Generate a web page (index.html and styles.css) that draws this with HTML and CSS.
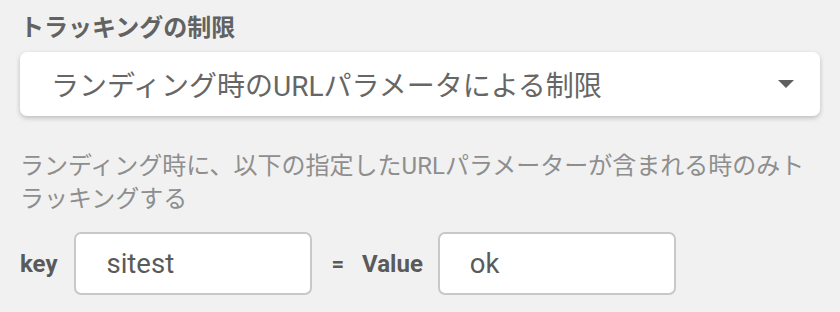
FILE: index.html
```html
<!DOCTYPE html>
<html lang="ja">
<head>
  <meta charset="UTF-8" />
  <title>トラッキングの制限</title>
  <link rel="stylesheet" href="styles.css">
</head>
<body>
  <section class="setting">
    <h3 class="setting-title">トラッキングの制限</h3>

    <div class="select-box">
      <span class="select-text">ランディング時のURLパラメータによる制限</span>
      <svg class="select-arrow" width="16" height="8" viewBox="0 0 16 8">
        <path d="M0 0 H16 L8 8 Z" fill="#5f5f5f"/>
      </svg>
    </div>

    <p class="setting-desc">ランディング時に、以下の指定したURLパラメーターが含まれる時のみトラッキングする</p>

    <div class="param-row">
      <label class="param-label" for="keyInput">key</label>
      <input id="keyInput" class="param-input" type="text" value="sitest" />
      <span class="param-eq">=</span>
      <label class="param-label" for="valueInput">Value</label>
      <input id="valueInput" class="param-input" type="text" value="ok" />
    </div>
  </section>
</body>
</html>
```

FILE: styles.css
```css
/* Base */
body {
  margin: 0;
  padding: 12px 20px 0;
  background: #f1f1f1;
  font-family: Roboto, "Noto Sans CJK JP", sans-serif;
  color: #666;
}

.setting {
  width: 800px;
}

/* Title */
.setting-title {
  margin: 0 0 7px;
  font-size: 24px;
  line-height: 33px;
  font-weight: 700;
  color: #626262;
}

/* Select */
.select-box {
  display: flex;
  align-items: center;
  justify-content: space-between;
  height: 64px;
  padding: 0 26px 0 31px;
  background: #fff;
  border-radius: 7px;
  box-shadow: 0 2px 5px rgba(0,0,0,0.22);
}

.select-text {
  font-size: 28px;
  color: #666;
}

.select-arrow {
  display: block;
}

/* Description */
.setting-desc {
  margin: 34px 0 0;
  font-size: 24px;
  line-height: 33px;
  color: #8e8e8e;
}

/* Key / Value row */
.param-row {
  display: flex;
  align-items: center;
  margin-top: 16px;
}

.param-label {
  font-size: 24px;
  font-weight: 700;
  color: #5a5a5a;
}

.param-input {
  box-sizing: border-box;
  width: 238px;
  height: 63px;
  margin-left: 17px;
  padding: 0 0 0 30px;
  border: 2px solid #c8c8c8;
  border-radius: 7px;
  background: #fff;
  font-family: Roboto, sans-serif;
  font-size: 27.5px;
  color: #5a5a5a;
}

.param-input:focus {
  outline: none;
}

.param-eq {
  margin: 0 18px 0 19px;
  font-size: 22px;
  font-weight: 700;
  color: #5a5a5a;
}

.param-eq + .param-label + .param-input {
  margin-left: 15px;
}
```
